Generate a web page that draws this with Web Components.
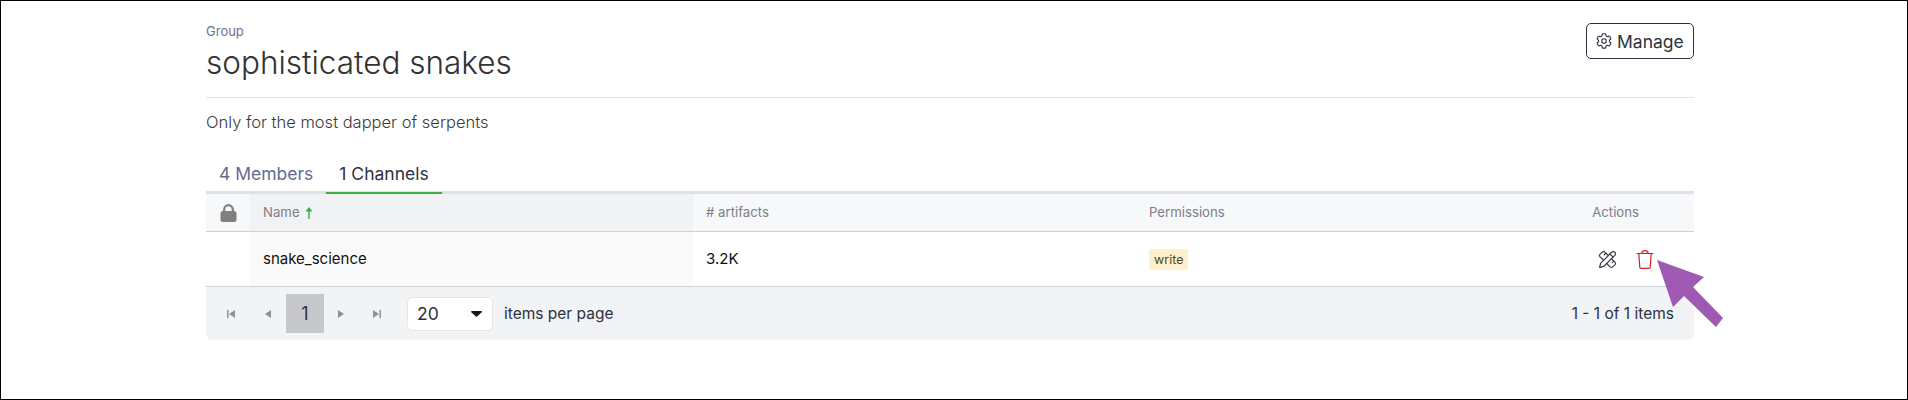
<!DOCTYPE html>
<html>
<head>
<meta charset="utf-8">
<style>
html, body { margin: 0; background: #fff; }
body { font-family: Inter, "Liberation Sans", sans-serif; }
</style>
</head>
<body>
<group-page>
  <group-header slot="header" label="Group" name="sophisticated snakes"></group-header>
  <p slot="desc">Only for the most dapper of serpents</p>
  <tab-bar slot="tabs"></tab-bar>
  <channel-table slot="table"></channel-table>
</group-page>

<script>
const pageTemplate = document.createElement("template");
pageTemplate.innerHTML = `
<style>
:host { display: block; box-sizing: border-box; height: 400px; border: 1px solid #000; position: relative; overflow: hidden; }
.wrap { width: 1488px; margin: 0 0 0 205px; padding-top: 22px; }
::slotted(p) { margin: 14px 0 25px; font-size: 16.5px; line-height: 20px; font-weight: 300; color: #3a3a3a; }
.arrow { position: absolute; left: 1656px; top: 259px; }
</style>
<div class="wrap">
  <slot name="header"></slot>
  <slot name="desc"></slot>
  <slot name="tabs"></slot>
  <slot name="table"></slot>
</div>
<svg class="arrow" width="70" height="70" viewBox="0 0 70 70"><path d="M0 0 L47 17 L36 27 L66 58 L59 67 L27 36 L16 47 Z" fill="#9f59b2"/></svg>
`;
class GroupPage extends HTMLElement {
  constructor() {
    super();
    this.attachShadow({ mode: "open" });
    this.shadowRoot.appendChild(pageTemplate.content.cloneNode(true));
  }
}
customElements.define("group-page", GroupPage);

const headerTemplate = document.createElement("template");
headerTemplate.innerHTML = `
<style>
:host { display: flex; justify-content: space-between; align-items: flex-start; height: 75px; border-bottom: 1px solid #e2e3e5; box-sizing: border-box; }
.label { font-size: 13px; line-height: 16px; color: #6b7394; }
h1 { margin: 4px 0 0; font-size: 31.500px; line-height: 40px; font-weight: 300; color: #333; }
button { display: flex; align-items: center; gap: 4px; box-sizing: border-box; height: 36px; width: 108px; padding: 0 0 0 8px; background: #fff; border: 1px solid #2d3142; border-radius: 5px; font: 400 17.500px Inter, "Liberation Sans", sans-serif; color: #2d3142; }
</style>
<div>
  <div class="label"></div>
  <h1></h1>
</div>
<button>
  <svg width="18" height="18" viewBox="0 0 24 24" fill="none" stroke="#2d3142" stroke-width="1.500" stroke-linecap="round" stroke-linejoin="round"><path d="M9.6 3.2a1 1 0 0 1 1-.8h2.8a1 1 0 0 1 1 .8l.3 1.9 1.9 1.1 1.8-.7a1 1 0 0 1 1.2.4l1.4 2.4a1 1 0 0 1-.2 1.3L19.3 11v2.1l1.5 1.2a1 1 0 0 1 .2 1.3l-1.4 2.4a1 1 0 0 1-1.2.4l-1.8-.7-1.9 1.1-.3 1.9a1 1 0 0 1-1 .8h-2.8a1 1 0 0 1-1-.8l-.3-1.9-1.9-1.1-1.8.7a1 1 0 0 1-1.2-.4L3 15.600a1 1 0 0 1 .2-1.3L4.700 13v-2L3.200 9.800A1 1 0 0 1 3 8.500l1.4-2.4a1 1 0 0 1 1.2-.4l1.8.7 1.9-1.1z"/><circle cx="12" cy="12" r="3"/></svg>
  <span>Manage</span>
</button>
`;
class GroupHeader extends HTMLElement {
  constructor() {
    super();
    this.attachShadow({ mode: "open" });
    this.shadowRoot.appendChild(headerTemplate.content.cloneNode(true));
    this.shadowRoot.querySelector(".label").innerText = this.getAttribute("label");
    this.shadowRoot.querySelector("h1").innerText = this.getAttribute("name");
  }
}
customElements.define("group-header", GroupHeader);

const tabsTemplate = document.createElement("template");
tabsTemplate.innerHTML = `
<style>
:host { display: flex; border-bottom: 3px solid #dfe1e8; height: 37px; box-sizing: border-box; font-size: 17.500px; }
div { padding: 0 13px; height: 37px; box-sizing: border-box; line-height: 33px; color: #636b8e; }
.on { color: #2d3142; border-bottom: 2px solid #3cae46; }
</style>
<div>4 Members</div>
<div class="on">1 Channels</div>
`;
class TabBar extends HTMLElement {
  constructor() {
    super();
    this.attachShadow({ mode: "open" });
    this.shadowRoot.appendChild(tabsTemplate.content.cloneNode(true));
  }
}
customElements.define("tab-bar", TabBar);

const tableTemplate = document.createElement("template");
tableTemplate.innerHTML = `
<style>
:host { display: block; font-size: 13px; }
.row { display: grid; grid-template-columns: 44px 443px 443px 1fr 160px; }
.head { height: 38px; border-bottom: 1px solid #cfd1d6; box-sizing: border-box; background: #f7f8fa; color: #7c7f86; line-height: 37px; font-size: 13.200px; }
.head > div { padding-left: 13px; }
.head .lock { padding: 0; display: flex; align-items: center; justify-content: center; }
.head .name { background: #f1f2f4; display: flex; align-items: center; gap: 5px; }
.head .act { padding: 0 55px 0 0; text-align: right; }
.body { height: 55px; border-bottom: 1px solid #cfd1d6; box-sizing: border-box; background: #fff; color: #111; line-height: 54px; font-size: 15px; }
.body > div { padding-left: 13px; }
.body .lock { padding: 0; }
.body .name { background: #fafafa; }
.body .act { padding: 0 40px 0 0; display: flex; align-items: center; justify-content: flex-end; gap: 19px; }
.tag { display: inline-block; font-size: 12.500px; line-height: 21px; padding: 0 5px; background: #fdf0cf; color: #5a4410; border-radius: 3px; vertical-align: middle; }
.foot { display: flex; align-items: center; height: 53px; background: #f2f3f5; border-radius: 0 0 6px 6px; padding: 0 20px 0 6px; color: #2d3142; font-size: 15.500px; }
.foot .pager { display: flex; align-items: center; }
.foot .pg { width: 38px; height: 39px; display: flex; align-items: center; justify-content: center; }
.foot .pg.narrow { width: 36px; }
.foot .pg.narrower { width: 34px; }
.foot .cur { background: #c7c8cc; font-size: 18px; color: #2d3142; }
.sel { width: 86px; height: 34px; box-sizing: border-box; background: #fff; border: 1px solid #e6e7ea; border-radius: 5px; margin-left: 11px; padding: 0 10px 0 9px; display: flex; align-items: center; justify-content: space-between; font-size: 17.500px; color: #2d3142; }
.lbl { margin-left: 11px; }
.total { margin-left: auto; }
</style>
<div class="row head">
  <div class="lock"><svg width="17" height="18" viewBox="0 0 17 18"><path d="M4.200 8V5.500a4.300 4.300 0 0 1 8.600 0V8" fill="none" stroke="#7f7f7f" stroke-width="2.200"/><rect x="0.500" y="7" width="16" height="11" rx="2.500" fill="#7f7f7f"/></svg></div>
  <div class="name">Name <svg width="8" height="12" viewBox="0 0 8 12"><path d="M4 0 L7.500 4.500 H4.700 V12 H3.300 V4.500 H.5 Z" fill="#3cae46"/></svg></div>
  <div># artifacts</div>
  <div>Permissions</div>
  <div class="act">Actions</div>
</div>
<div class="row body">
  <div class="lock"></div>
  <div class="name">snake_science</div>
  <div>3.2K</div>
  <div><span class="tag">write</span></div>
  <div class="act">
    <svg width="19" height="19" viewBox="0 0 24 24" fill="none" stroke="#3a3d45" stroke-width="1.500" stroke-linecap="round" stroke-linejoin="round"><path d="M13 7 8.700 2.700a2.410 2.410 0 0 0-3.400 0L2.700 5.300a2.410 2.410 0 0 0 0 3.400L7 13"/><path d="m8 6 2-2"/><path d="m18 16 2-2"/><path d="m17 11 4.300 4.300c.94.94.94 2.460 0 3.400l-2.600 2.600c-.94.94-2.460.94-3.400 0L11 17"/><path d="M21.174 6.812a1 1 0 0 0-3.986-3.987L3.842 16.174a2 2 0 0 0-.5.83l-1.321 4.352a.5.5 0 0 0 .623.622l4.353-1.320a2 2 0 0 0 .83-.497z"/><path d="m15 5 4 4"/></svg>
    <svg width="18" height="19" viewBox="0 0 18 19" fill="none" stroke="#dc1a1f" stroke-width="1.200" stroke-linecap="round" stroke-linejoin="round"><path d="M1 3.500h16M2.800 3.500l1 13.700a1.300 1.300 0 0 0 1.300 1.200h7.800a1.300 1.300 0 0 0 1.300-1.200l1-13.700M5.800 3.300c.2-1.700 1.400-2.700 3.200-2.700s3 1 3.200 2.700"/></svg>
  </div>
</div>
<div class="foot">
  <div class="pager">
    <div class="pg"><svg width="10" height="10" viewBox="0 0 10 10" fill="#8f9196"><rect x="1" y="1" width="1.500" height="8"/><path d="M9 1v8L3 5z"/></svg></div>
    <div class="pg narrow"><svg width="10" height="10" viewBox="0 0 10 10" fill="#8f9196"><path d="M8 1v8L2 5z"/></svg></div>
    <div class="pg cur">1</div>
    <div class="pg narrower"><svg width="10" height="10" viewBox="0 0 10 10" fill="#8f9196"><path d="M2 1v8l6-4z"/></svg></div>
    <div class="pg"><svg width="10" height="10" viewBox="0 0 10 10" fill="#8f9196"><path d="M1 1v8l6-4z"/><rect x="7.500" y="1" width="1.500" height="8"/></svg></div>
  </div>
  <div class="sel"><span>20</span><svg width="11" height="6" viewBox="0 0 11 6"><path d="M0 1 a1 1 0 0 1 1-1 H10 a1 1 0 0 1 1 1 L5.500 6 Z" fill="#15171f"/></svg></div>
  <span class="lbl">items per page</span>
  <span class="total">1 - 1 of 1 items</span>
</div>
`;
class ChannelTable extends HTMLElement {
  constructor() {
    super();
    this.attachShadow({ mode: "open" });
    this.shadowRoot.appendChild(tableTemplate.content.cloneNode(true));
  }
}
customElements.define("channel-table", ChannelTable);
</script>
</body>
</html>
